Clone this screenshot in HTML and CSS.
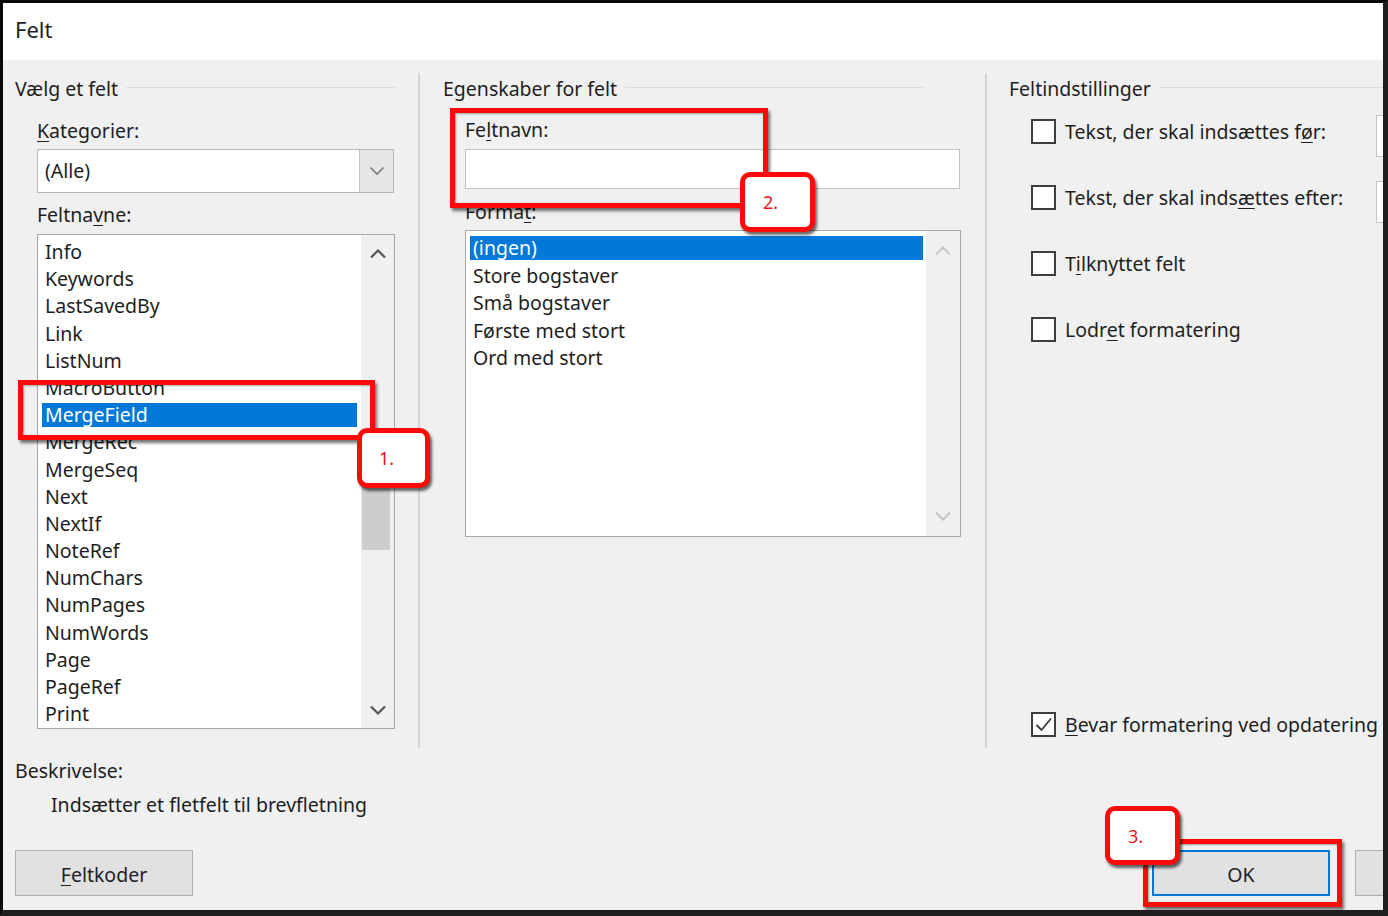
FILE: index.html
```html
<!DOCTYPE html>
<html lang="da">
<head>
<meta charset="utf-8">
<title>Felt</title>
<link rel="stylesheet" href="styles.css">
</head>
<body>
<div class="frame">
  <div class="dialog">
    <div class="titlebar">Felt</div>
    <div class="body">
      <div class="columns">
        <section class="col col-left">
          <div class="group-head"><span>Vælg et felt</span><i class="rule"></i></div>
          <div class="indent">
            <div class="label label-cat"><u>K</u>ategorier:</div>
            <div class="combo">
              <span class="combo-text">(Alle)</span>
              <span class="combo-btn"><svg width="16" height="10" viewBox="0 0 16 10"><polyline points="1.5,1.5 8,8 14.5,1.5" fill="none" stroke="#7a7a7a" stroke-width="1.6"/></svg></span>
            </div>
            <div class="label label-names">Feltna<u>v</u>ne:</div>
            <div class="listbox listbox-names">
              <ul class="items">
                <li>Info</li>
                <li>Keywords</li>
                <li>LastSavedBy</li>
                <li>Link</li>
                <li>ListNum</li>
                <li>MacroButton</li>
                <li class="sel">MergeField</li>
                <li>MergeRec</li>
                <li>MergeSeq</li>
                <li>Next</li>
                <li>NextIf</li>
                <li>NoteRef</li>
                <li>NumChars</li>
                <li>NumPages</li>
                <li>NumWords</li>
                <li>Page</li>
                <li>PageRef</li>
                <li>Print</li>
              </ul>
              <div class="scrollbar">
                <div class="sb-btn sb-up"><svg width="18" height="11" viewBox="0 0 18 11"><polyline points="2,9.5 9,2.5 16,9.5" fill="none" stroke="#555" stroke-width="2.2"/></svg></div>
                <div class="sb-track"><div class="sb-thumb" style="margin-top:216px;height:63px"></div></div>
                <div class="sb-btn sb-down"><svg width="18" height="11" viewBox="0 0 18 11"><polyline points="2,1.5 9,8.5 16,1.5" fill="none" stroke="#555" stroke-width="2.2"/></svg></div>
              </div>
            </div>
          </div>
        </section>

        <section class="col col-mid">
          <div class="group-head"><span>Egenskaber for felt</span><i class="rule"></i></div>
          <div class="indent">
            <div class="label label-fname">Fe<u>l</u>tnavn:</div>
            <div class="textbox"></div>
            <div class="label label-format">Forma<u>t</u>:</div>
            <div class="listbox listbox-format">
              <ul class="items">
                <li class="sel">(ingen)</li>
                <li>Store bogstaver</li>
                <li>Små bogstaver</li>
                <li>Første med stort</li>
                <li>Ord med stort</li>
              </ul>
              <div class="scrollbar">
                <div class="sb-btn sb-up"><svg width="18" height="11" viewBox="0 0 18 11"><polyline points="2,9.5 9,2.5 16,9.5" fill="none" stroke="#c6c6c6" stroke-width="2"/></svg></div>
                <div class="sb-track"></div>
                <div class="sb-btn sb-down"><svg width="18" height="11" viewBox="0 0 18 11"><polyline points="2,1.5 9,8.5 16,1.5" fill="none" stroke="#c6c6c6" stroke-width="2"/></svg></div>
              </div>
            </div>
          </div>
        </section>

        <section class="col col-right">
          <div class="group-head"><span>Feltindstillinger</span><i class="rule"></i></div>
          <div class="indent opts">
            <div class="opt opt-first">
              <span class="cb"></span>
              <span class="opt-text opt-fixed">Tekst, der skal indsættes f<u>ø</u>r:</span>
              <span class="opt-input"></span>
            </div>
            <div class="opt">
              <span class="cb"></span>
              <span class="opt-text opt-fixed">Tekst, der skal inds<u>æ</u>ttes efter:</span>
              <span class="opt-input"></span>
            </div>
            <div class="opt">
              <span class="cb"></span>
              <span class="opt-text">T<u>i</u>lknyttet felt</span>
            </div>
            <div class="opt">
              <span class="cb"></span>
              <span class="opt-text">Lodr<u>e</u>t formatering</span>
            </div>
            <div class="opt opt-last">
              <span class="cb cb-checked"><svg width="21" height="21" viewBox="0 0 21 21"><polyline points="3.5,11 8.5,16 18,4.5" fill="none" stroke="#3a3a3a" stroke-width="1.8"/></svg></span>
              <span class="opt-text"><u>B</u>evar formatering ved opdatering</span>
            </div>
          </div>
        </section>
      </div>

      <div class="desc-head">Beskrivelse:</div>
      <div class="desc-text">Indsætter et fletfelt til brevfletning</div>

      <div class="buttons">
        <div class="btn"><span><u>F</u>eltkoder</span></div>
        <div class="btn btn-ok">OK</div>
        <div class="btn btn-cancel"></div>
      </div>
    </div>
  </div>

  <div class="mark mark-1"></div>
  <div class="tag tag-1">1.</div>
  <div class="mark mark-2"></div>
  <div class="tag tag-2">2.</div>
  <div class="mark mark-3"></div>
  <div class="tag tag-3">3.</div>
</div>
</body>
</html>
```

FILE: styles.css
```css
* { box-sizing: border-box; }

html, body {
  margin: 0;
  padding: 0;
  background: #000;
}

body {
  font-family: "Noto Sans", "Segoe UI", sans-serif;
  font-size: 19.5px;
  color: #1e1e1e;
}

u { text-decoration-thickness: 1px; text-underline-offset: 3px; }

.frame {
  position: relative;
  width: 1388px;
  height: 916px;
  border-style: solid;
  border-color: #080808 #1e1e1e #1e1e1e #080808;
  border-width: 3px 5px 6px 3px;
  overflow: hidden;
  background: #f0f0f0;
}

.dialog {
  width: 1542px;
  height: 100%;
  display: flex;
  flex-direction: column;
}

.titlebar {
  flex: none;
  height: 57px;
  background: #fff;
  padding-left: 12px;
  padding-bottom: 6px;
  display: flex;
  align-items: center;
  font-size: 22px;
}

.body {
  flex: 1;
  background: #f0f0f0;
  display: flex;
  flex-direction: column;
}

.columns {
  display: flex;
  margin-top: 13px;
  height: 675px;
}

.col {
  padding-top: 1px;
  display: flex;
  flex-direction: column;
}

.col-left {
  width: 415px;
  padding-left: 12px;
  padding-right: 23px;
}

.col-mid {
  width: 567px;
  border-left: 2px solid #d5d5d5;
  padding-left: 23px;
  padding-right: 24px;
}

.col-right {
  flex: 1;
  border-left: 2px solid #d5d5d5;
  padding-left: 22px;
  padding-bottom: 10px;
}

.group-head {
  height: 28px;
  display: flex;
  align-items: center;
  white-space: nowrap;
}

.group-head .rule {
  flex: 1;
  height: 1px;
  background: #dcdcdc;
  margin-left: 8px;
  margin-top: -2px;
}

.col-mid .group-head .rule { margin-right: 38px; }

.indent { padding-left: 22px; }

.label {
  height: 28px;
  line-height: 28px;
  white-space: nowrap;
}

.label-cat { margin-top: 15px; }
.label-names { margin-top: 8px; }
.label-fname { margin-top: 14px; }
.label-format { margin-top: 9px; }

.combo {
  margin-top: 4px;
  width: 357px;
  height: 44px;
  background: #fff;
  border: 1px solid #b8b8b8;
  display: flex;
}

.combo-text {
  flex: 1;
  padding-left: 7px;
  line-height: 42px;
}

.combo-btn {
  width: 34px;
  background: #e6e6e6;
  border-left: 1px solid #c6c6c6;
  display: flex;
  align-items: center;
  justify-content: center;
}

.textbox {
  margin-top: 5px;
  width: 495px;
  height: 40px;
  background: #fff;
  border: 1px solid #c4c4c4;
}

.listbox {
  background: #fff;
  border: 1px solid #a8a8a8;
  display: flex;
}

.listbox-names {
  margin-top: 5px;
  width: 358px;
  height: 495px;
}

.listbox-format {
  margin-top: 4px;
  width: 496px;
  height: 307px;
}

.items {
  list-style: none;
  margin: 0;
  padding: 5px 0 0 0;
  flex: 1;
  min-width: 0;
  overflow: hidden;
}

.items li {
  height: 24px;
  line-height: 24px;
  padding-left: 3px;
  white-space: nowrap;
}

.listbox-names .items li { margin: 0 4px 3.2px 4px; }
.listbox-format .items li { margin: 0 3px 3.5px 4px; }

.items li.sel {
  background: #0078d7;
  color: #fff;
}

.scrollbar {
  flex: none;
  background: #f0f0f0;
  display: flex;
  flex-direction: column;
}

.listbox-names .scrollbar { width: 33px; }
.listbox-format .scrollbar { width: 34px; }

.sb-btn {
  flex: none;
  display: flex;
  align-items: center;
  justify-content: center;
}

.listbox-names .sb-btn { height: 36px; }
.listbox-format .sb-up { height: 38px; }
.listbox-format .sb-down { height: 40px; }

.sb-track { flex: 1; }

.sb-thumb {
  background: #cdcdcd;
  margin: 0 4px 0 1px;
}

.opts {
  flex: 1;
  display: flex;
  flex-direction: column;
}

.opt {
  height: 28px;
  display: flex;
  align-items: center;
  gap: 9px;
  margin-top: 38px;
  white-space: nowrap;
}

.opt-first { margin-top: 15px; }
.opt-last { margin-top: auto; }

.cb {
  flex: none;
  width: 25px;
  height: 25px;
  border: 2px solid #3e3e3e;
  background: #fff;
  display: flex;
  align-items: center;
  justify-content: center;
}

.opt-fixed {
  flex: none;
  width: 302px;
}

.opt-input {
  flex: none;
  align-self: flex-start;
  margin-top: -2px;
  width: 180px;
  height: 42px;
  background: #fff;
  border: 1px solid #c4c4c4;
}

.desc-head {
  margin-top: 9px;
  padding-left: 12px;
  height: 28px;
  line-height: 28px;
}

.desc-text {
  margin-top: 6px;
  padding-left: 48px;
  height: 28px;
  line-height: 28px;
}

.buttons {
  margin-top: 31px;
  padding: 0 12px;
  display: flex;
  align-items: flex-start;
}

.btn {
  flex: none;
  width: 178px;
  height: 46px;
  padding-top: 3px;
  background: #e1e1e1;
  border: 1px solid #adadad;
  display: flex;
  align-items: center;
  justify-content: center;
}

.btn-ok {
  margin-left: auto;
  border: 2px solid #0078d7;
}

.btn-cancel { margin-left: 25px; }

/* annotation overlays */
.mark {
  position: absolute;
  border: 5px solid #ff0a0a;
  box-shadow: 2px 3px 3px rgba(0, 0, 0, 0.55), inset 1px 1px 2px rgba(0, 0, 0, 0.35);
}

.mark-1 { left: 15px; top: 377px; width: 357px; height: 60px; }
.mark-2 { left: 447px; top: 105px; width: 318px; height: 100px; }
.mark-3 { left: 1140px; top: 836px; width: 199px; height: 68px; }

.tag {
  position: absolute;
  background: #fff;
  border: 5px solid #ff0a0a;
  border-radius: 10px;
  box-shadow: 2px 3px 3px rgba(0, 0, 0, 0.6);
  color: #e8141b;
  font-size: 18px;
  display: flex;
  align-items: center;
  justify-content: center;
  padding-right: 14px;
}

.tag-1 { left: 354px; top: 425px; width: 73px; height: 60px; }
.tag-2 { left: 737px; top: 169px; width: 75px; height: 60px; }
.tag-3 { left: 1102px; top: 803px; width: 75px; height: 59px; }
```
